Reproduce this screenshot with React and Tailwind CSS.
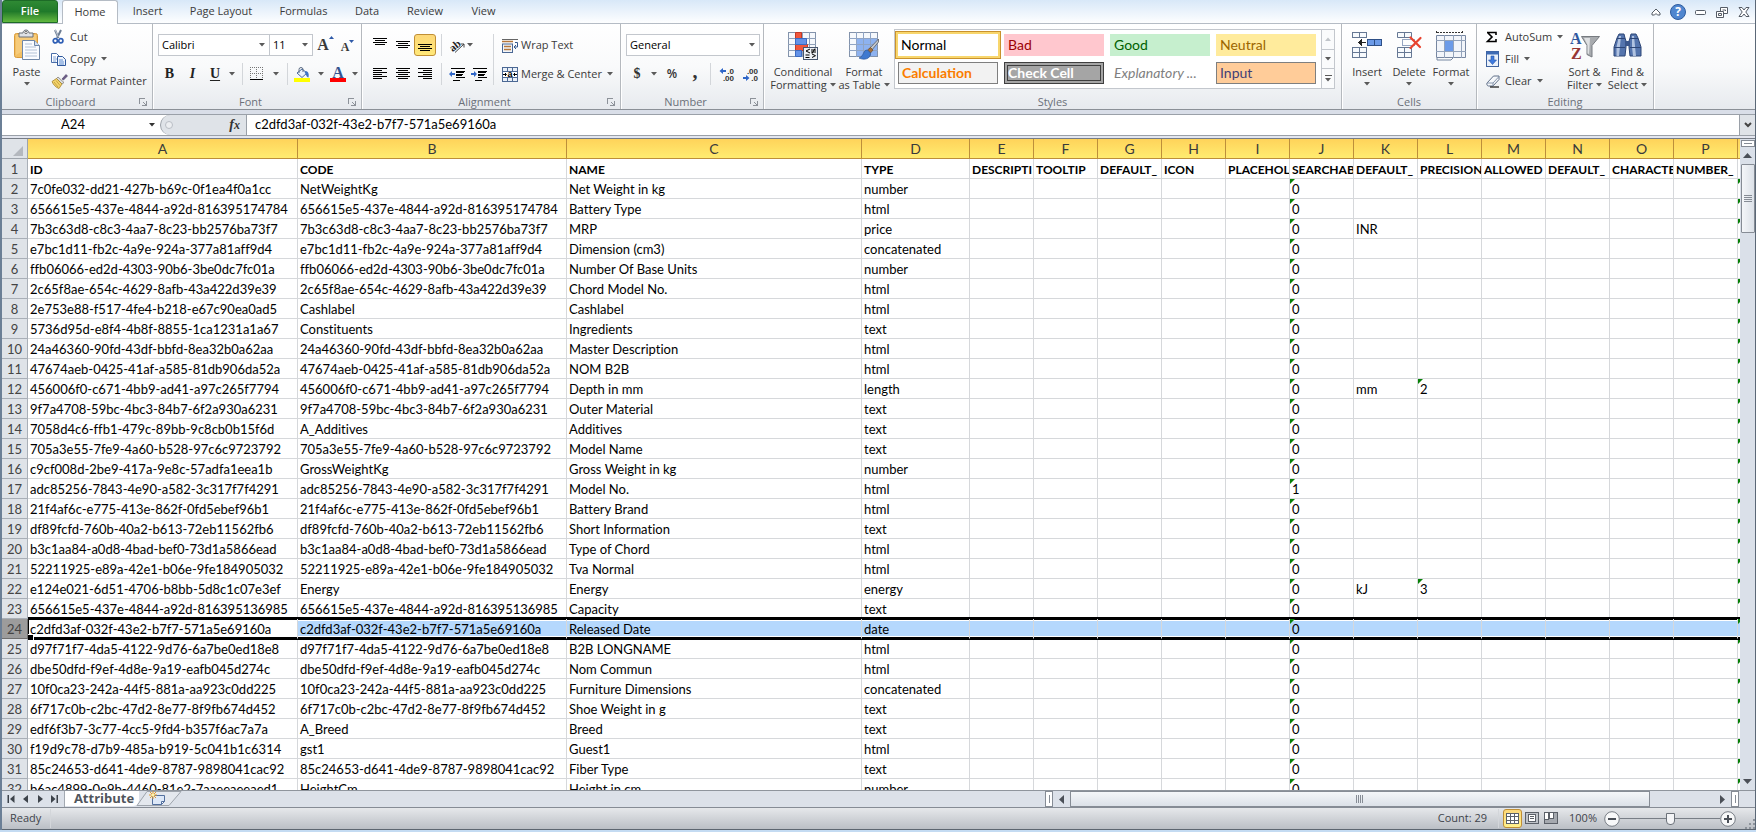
import React, { useState } from 'react';
import clsx from 'clsx';

const TABS = [
  { label: 'Insert', width: 'w-[57px]' },
  { label: 'Page Layout', width: 'w-[90px]' },
  { label: 'Formulas', width: 'w-[75px]' },
  { label: 'Data', width: 'w-[52px]' },
  { label: 'Review', width: 'w-[64px]' },
  { label: 'View', width: 'w-[53px]' },
];

const COLUMNS = [
  { letter: 'A', title: 'ID', width: 'w-[270px]' },
  { letter: 'B', title: 'CODE', width: 'w-[269px]' },
  { letter: 'C', title: 'NAME', width: 'w-[295px]' },
  { letter: 'D', title: 'TYPE', width: 'w-[108px]' },
  { letter: 'E', title: 'DESCRIPTI', width: 'w-[64px]' },
  { letter: 'F', title: 'TOOLTIP', width: 'w-[64px]' },
  { letter: 'G', title: 'DEFAULT_', width: 'w-[64px]' },
  { letter: 'H', title: 'ICON', width: 'w-[64px]' },
  { letter: 'I', title: 'PLACEHOL', width: 'w-[64px]' },
  { letter: 'J', title: 'SEARCHAB', width: 'w-[64px]' },
  { letter: 'K', title: 'DEFAULT_', width: 'w-[64px]' },
  { letter: 'L', title: 'PRECISION', width: 'w-[64px]' },
  { letter: 'M', title: 'ALLOWED', width: 'w-[64px]' },
  { letter: 'N', title: 'DEFAULT_', width: 'w-[64px]' },
  { letter: 'O', title: 'CHARACTE', width: 'w-[64px]' },
  { letter: 'P', title: 'NUMBER_', width: 'w-[64px]' },
  { letter: '', title: '', width: 'w-[64px]' },
];

// id, code (null when it repeats the id), name, type, searchable, unit, precision
const ROWS = [
  ['7c0fe032-dd21-427b-b69c-0f1ea4f0a1cc', 'NetWeightKg', 'Net Weight in kg', 'number', '0'],
  ['656615e5-437e-4844-a92d-816395174784', null, 'Battery Type', 'html', '0'],
  ['7b3c63d8-c8c3-4aa7-8c23-bb2576ba73f7', null, 'MRP', 'price', '0', 'INR'],
  ['e7bc1d11-fb2c-4a9e-924a-377a81aff9d4', null, 'Dimension (cm3)', 'concatenated', '0'],
  ['ffb06066-ed2d-4303-90b6-3be0dc7fc01a', null, 'Number Of Base Units', 'number', '0'],
  ['2c65f8ae-654c-4629-8afb-43a422d39e39', null, 'Chord Model No.', 'html', '0'],
  ['2e753e88-f517-4fe4-b218-e67c90ea0ad5', 'Cashlabel', 'Cashlabel', 'html', '0'],
  ['5736d95d-e8f4-4b8f-8855-1ca1231a1a67', 'Constituents', 'Ingredients', 'text', '0'],
  ['24a46360-90fd-43df-bbfd-8ea32b0a62aa', null, 'Master Description', 'html', '0'],
  ['47674aeb-0425-41af-a585-81db906da52a', null, 'NOM B2B', 'html', '0'],
  ['456006f0-c671-4bb9-ad41-a97c265f7794', null, 'Depth in mm', 'length', '0', 'mm', '2'],
  ['9f7a4708-59bc-4bc3-84b7-6f2a930a6231', null, 'Outer Material', 'text', '0'],
  ['7058d4c6-ffb1-479c-89bb-9c8cb0b15f6d', 'A_Additives', 'Additives', 'text', '0'],
  ['705a3e55-7fe9-4a60-b528-97c6c9723792', null, 'Model Name', 'text', '0'],
  ['c9cf008d-2be9-417a-9e8c-57adfa1eea1b', 'GrossWeightKg', 'Gross Weight in kg', 'number', '0'],
  ['adc85256-7843-4e90-a582-3c317f7f4291', null, 'Model No.', 'html', '1'],
  ['21f4af6c-e775-413e-862f-0fd5ebef96b1', null, 'Battery Brand', 'html', '0'],
  ['df89fcfd-760b-40a2-b613-72eb11562fb6', null, 'Short Information', 'text', '0'],
  ['b3c1aa84-a0d8-4bad-bef0-73d1a5866ead', null, 'Type of Chord', 'html', '0'],
  ['52211925-e89a-42e1-b06e-9fe184905032', null, 'Tva Normal', 'html', '0'],
  ['e124e021-6d51-4706-b8bb-5d8c1c07e3ef', 'Energy', 'Energy', 'energy', '0', 'kJ', '3'],
  ['656615e5-437e-4844-a92d-816395136985', null, 'Capacity', 'text', '0'],
  ['c2dfd3af-032f-43e2-b7f7-571a5e69160a', null, 'Released Date', 'date', '0'],
  ['d97f71f7-4da5-4122-9d76-6a7be0ed18e8', null, 'B2B LONGNAME', 'html', '0'],
  ['dbe50dfd-f9ef-4d8e-9a19-eafb045d274c', null, 'Nom Commun', 'html', '0'],
  ['10f0ca23-242a-44f5-881a-aa923c0dd225', null, 'Furniture Dimensions', 'concatenated', '0'],
  ['6f717c0b-c2bc-47d2-8e77-8f9fb674d452', null, 'Shoe Weight in g', 'text', '0'],
  ['edf6f3b7-3c77-4cc5-9fd4-b357f6ac7a7a', 'A_Breed', 'Breed', 'text', '0'],
  ['f19d9c78-d7b9-485a-b919-5c041b1c6314', 'gst1', 'Guest1', 'html', '0'],
  ['85c24653-d641-4de9-8787-9898041cac92', null, 'Fiber Type', 'text', '0'],
  ['b6ac4899-0e9b-4460-81e2-7aaeeaeeaed1', 'HeightCm', 'Height in cm', 'number', '0'],
];

const SELECTED_ROW = 24;

function Caret({ className = 'text-[#5a5a5a]' }) {
  return (
    <svg width="6" height="4" viewBox="0 0 6 4" className={clsx('shrink-0', className)}>
      <path d="M0 0h6L3 3.6z" fill="currentColor" />
    </svg>
  );
}

function Svg({ w, h, children, crisp }) {
  return (
    <svg width={w} height={h} viewBox={`0 0 ${w} ${h}`} fill="none" className="shrink-0 overflow-visible" shapeRendering={crisp ? 'crispEdges' : undefined}>
      {children}
    </svg>
  );
}

/* ---------- icons ---------- */

function PasteIcon() {
  return (
    <Svg w={28} h={32}>
      <rect x="1.5" y="4.5" width="23" height="24" rx="2" fill="#f2bf62" stroke="#d99b3c" />
      <path d="M3 6h20v8L3 26z" fill="#f8d084" opacity=".7" />
      <path d="M6 8V4h4c0-4 6-4 6 0h4v4z" fill="#dfe2e6" stroke="#6b7178" />
      <circle cx="13" cy="3.5" r="1.2" fill="#fff" stroke="#555" strokeWidth=".8" />
      <path d="M9.500 11.500h12l5 5v14h-17z" fill="#fafcff" stroke="#6f87a8" />
      <path d="M21.500 11.500v5h5" fill="#d6e0ee" stroke="#6f87a8" />
      <path d="M12 15h7M12 18h11M12 21h12M12 24h12M12 27h12" stroke="#b3c2d6" />
    </Svg>
  );
}

function CutIcon() {
  return (
    <Svg w={14} h={14}>
      <path d="M4 0l3.500 8M10 0L6 8" stroke="#6c7c92" strokeWidth="2" />
      <path d="M4.200 0l3.200 7" stroke="#dfe7f0" strokeWidth=".7" />
      <circle cx="4.300" cy="10.800" r="2.100" stroke="#2f5fb5" strokeWidth="1.700" />
      <circle cx="9.800" cy="10.800" r="2.100" stroke="#2f5fb5" strokeWidth="1.700" />
    </Svg>
  );
}

function CopyIcon() {
  return (
    <Svg w={15} h={13}>
      <path d="M.5.5h5l3 3v6h-8z" fill="#fff" stroke="#4a6ea9" />
      <path d="M2 4h3M2 6h4M2 8h3" stroke="#7fa1d6" />
      <path d="M6.500 3.500h5l3 3v6h-8z" fill="#eef4fc" stroke="#2f589c" />
      <path d="M8 7h4M8 9h5M8 11h5" stroke="#5d8bd0" />
    </Svg>
  );
}

function PainterIcon() {
  return (
    <Svg w={17} h={15}>
      <path d="M11 5l4-4.500 1.500 1.500-4 4z" fill="#6a5a86" stroke="#4c4064" strokeWidth=".6" />
      <path d="M7 3l6 5.500-2 1.500-5.500-5.500z" fill="#d8dade" stroke="#77716a" strokeWidth=".7" />
      <path d="M5.500 4.500L1 7.500c1 3 4 6 7 7l3-4.500z" fill="#f3d46b" stroke="#a5812c" strokeWidth=".8" />
      <path d="M3 8l4 5M5 6.500l4 5" stroke="#b98f30" strokeWidth=".7" />
    </Svg>
  );
}

function GrowFontIcon({ small }) {
  return (
    <span className={clsx("flex items-start font-['Liberation_Serif',serif] leading-none font-bold text-[#3a3a3a]", small ? 'pt-1 text-xs' : 'text-base')}>
      A
      <svg width="5" height="3" viewBox="0 0 5 3" className="-mt-px shrink-0">
        <path d={small ? 'M0 0h5L2.500 3z' : 'M0 3h5L2.500 0z'} fill="#2f5aa8" />
      </svg>
    </span>
  );
}

function BorderIcon() {
  return (
    <Svg w={14} h={14} crisp>
      <path d="M0 .5h13M0 6.500h13M.5 0v12M6.500 0v12M12.500 0v12" stroke="#777" strokeDasharray="1 1" />
      <path d="M0 12.500h13" stroke="#000" />
    </Svg>
  );
}

function FillIcon() {
  return (
    <Svg w={16} h={15}>
      <path d="M3 6l5-4 5 4-5 4.500z" fill="#eaf1fa" stroke="#4c6c9c" />
      <path d="M5 6V2.500a2 2 0 014 0V5" stroke="#5c6c84" />
      <path d="M12 4c3 1 3 4 2.500 6.500C12 10 12 7 10.500 5z" fill="#3f74c4" />
      <path d="M0 11h16v4H0z" fill="#ff0" />
    </Svg>
  );
}

function FontColorIcon() {
  return (
    <span className="flex h-[15px] w-4 flex-col items-center justify-end border-b-4 border-[#f00] font-['Liberation_Serif',serif] text-base leading-[11px] font-bold text-[#34538f]">
      A
    </span>
  );
}

const LINES = {
  left: [[0, 14], [0, 9], [0, 14], [0, 9], [0, 14], [0, 9]],
  center: [[0, 14], [2, 10], [0, 14], [2, 10], [0, 14], [2, 10]],
  right: [[0, 14], [5, 9], [0, 14], [5, 9], [0, 14], [5, 9]],
};

function AlignIcon({ lines }) {
  return (
    <Svg w={14} h={12} crisp>
      {LINES[lines].map(([x, w], i) => (
        <rect key={i} x={x} y={i * 2} width={w} height="1" fill="#000" />
      ))}
    </Svg>
  );
}

function VAlignIcon({ offset }) {
  return (
    <Svg w={14} h={16} crisp>
      {[0, 2, 4, 6].map((y, i) => (
        <rect key={y} x={i % 2 ? 2 : 0} y={offset + y} width={i % 2 ? 10 : 14} height="1" fill="#000" />
      ))}
    </Svg>
  );
}

function IndentIcon({ right }) {
  return (
    <Svg w={16} h={14} crisp>
      <path d="M2 1.500h14M7 4.500h9M7 7.500h7M7 10.500h9M4 13.500h7" stroke="#000" />
      <path d="M7 5h8M7 8h6" stroke="#000" />
      <path d={right ? 'M0 6h3V4l3 3-3 3V8H0z' : 'M6 6H3V4L0 7l3 3V8h3z'} fill="#2f66c8" shapeRendering="auto" />
    </Svg>
  );
}

function OrientIcon() {
  return (
    <Svg w={16} h={15}>
      <text x="0" y="12" transform="rotate(-40 5 8)" fontFamily="Liberation Serif, serif" fontSize="11" fontWeight="bold" fill="#222">ab</text>
      <path d="M6 14.500L15 6M15 9.500V6h-3.500" stroke="#444" />
    </Svg>
  );
}

function WrapIcon() {
  return (
    <Svg w={17} h={15}>
      <path d="M0 1.500h16" stroke="#666" />
      <path d="M0 3.500h11" stroke="#b5763a" strokeWidth="1.500" />
      <rect x=".5" y="6" width="10" height="8.500" fill="#f3f6fa" stroke="#4b6894" />
      <path d="M2 8.500h7M2 11.500h7" stroke="#b5763a" strokeWidth="1.500" />
      <path d="M13 4.500h2.500V9H12M14 7l-2 2 2 2" stroke="#34588e" />
    </Svg>
  );
}

function MergeIcon() {
  return (
    <Svg w={16} h={15}>
      <rect x=".5" y=".5" width="15" height="14" fill="#e9f0f8" stroke="#4b6894" />
      <path d="M0 4.500h16M0 10.500h16M5.500 0v4M10.500 0v4M5.500 11v4M10.500 11v4" stroke="#4b6894" />
      <path d="M1 5h14v5H1z" fill="#fff" />
      <path d="M1 7.500h3M12 7.500h3M3 6l1.500 1.500L3 9M13 6l-1.500 1.500L13 9" stroke="#000" />
      <text x="5.500" y="10" fontFamily="Liberation Sans, sans-serif" fontSize="9" fontWeight="bold" fill="#000">a</text>
    </Svg>
  );
}

function DecimalIcon({ decrease }) {
  return (
    <Svg w={16} h={15}>
      <g fontFamily="Liberation Sans, sans-serif" fontSize="8" fontWeight="bold" fill="#333">
        <text x="15" y="7" textAnchor="end">{decrease ? '.00' : '.0'}</text>
        <text x="15" y="14" textAnchor="end">{decrease ? '.0' : '.00'}</text>
      </g>
      <path d={decrease ? 'M0 10h3V8l3.500 3L3 14v-2H0z' : 'M7 3H4V1L.5 4 4 7V5h3z'} fill="#2f66c8" />
    </Svg>
  );
}

function CondFormatIcon() {
  return (
    <Svg w={30} h={30}>
      <rect x=".5" y="1.500" width="27" height="24" fill="#f5f8fc" stroke="#8393ab" />
      <path d="M7.500 1v25M21.500 1v25M14.500 1v25M0 7.500h28M0 13.500h28M0 19.500h28" stroke="#8fa0b9" />
      <path d="M7.500 1.500h6v6h-6zM7.500 13.500h12v6h-12z" fill="#f0563c" stroke="#c23a26" />
      <path d="M7.500 7.500h11v6h-11zM7.500 19.500h6v6h-6z" fill="#6392e8" stroke="#3b6bc2" />
      <rect x="15.500" y="16.500" width="14" height="12" fill="#eef2f7" stroke="#46566f" />
      <path d="M22 18l-4 2 4 2M17.500 24h4M17.500 26.500h4M23 19h5M23 21h5M27 17.500l-3 5M24 23l3.500 1.700L24 26.500" stroke="#000" />
    </Svg>
  );
}

function TableFormatIcon() {
  return (
    <Svg w={30} h={30}>
      <rect x=".5" y="1.500" width="28" height="24" fill="#f5f8fc" stroke="#8393ab" />
      <path d="M7 8h21v17H7z" fill="#8db2f0" />
      <path d="M7.500 1v25M14.500 1v25M21.500 1v25M0 7.500h29M0 13.500h29M0 19.500h29" stroke="#8fa4c4" />
      <path d="M29.500 8L20 18l2 2 7.500-9z" fill="#c4c7cb" stroke="#595d63" strokeWidth=".8" />
      <path d="M21.500 16.500l-3 2.500 3 3 2.500-3z" fill="#a3703d" stroke="#6d4a27" strokeWidth=".7" />
      <path d="M18.500 19c-5 0-3 6-8.500 8 5 2.500 12 1 11.500-5z" fill="#3f79cf" stroke="#2a569d" strokeWidth=".7" />
    </Svg>
  );
}

function InsertIcon() {
  return (
    <Svg w={30} h={30} crisp>
      <path d="M.5 1.500h14v5H.5zM7.500 1.500v5M.5 16.500h14v10H.5zM.5 21.500h14M7.500 16.500v10" fill="#f7fafd" stroke="#667894" />
      <path d="M15.500 8.500h14v6h-14z" fill="#6c9be8" stroke="#2e4f86" />
      <path d="M22.500 8v7" stroke="#2e4f86" />
      <path d="M6 11.500L10 8v7z" fill="#222" />
      <path d="M9 11.500h5" stroke="#222" />
    </Svg>
  );
}

function DeleteIcon() {
  return (
    <Svg w={30} h={30}>
      <path d="M3.500 1.500h14v5h-14zM10.500 1.500v5M3.500 16.500h14v10h-14zM3.500 21.500h14M10.500 16.500v10" fill="#f7fafd" stroke="#667894" />
      <path d="M8.500 8.500h12v6h-12z" stroke="#2e4f86" strokeDasharray="1 1" />
      <path d="M16.500 6.500l9.500 9.500M26.500 7l-10 10" stroke="#e8432e" strokeWidth="2.200" strokeLinecap="round" />
    </Svg>
  );
}

function FormatCellsIcon() {
  return (
    <Svg w={30} h={30}>
      <path d="M1 1.500h25M.5 0v3M26.500 0v3" stroke="#333" strokeDasharray="2 1" />
      <path d="M.5 4.500h29v22h-29z" fill="#f2f5fa" stroke="#7787a1" />
      <path d="M8.500 4v23M17.500 4v23M25.500 4v23M0 9.500h30M0 20.500h30" stroke="#93a3bb" />
      <path d="M9 10h8v10H9z" fill="#6c9be8" />
      <path d="M1 27v2h14l2-2" stroke="#7787a1" />
    </Svg>
  );
}

function SumIcon() {
  return (
    <Svg w={12} h={14}>
      <path d="M1 2.500h9V5M1.500 2.500L6 7l-4.500 4.500H10V9" stroke="#000" strokeWidth="1.600" />
    </Svg>
  );
}

function FillDownIcon() {
  return (
    <Svg w={14} h={16}>
      <rect x=".5" y=".5" width="12" height="15" fill="#eaf1fb" stroke="#40639e" />
      <path d="M.5.5h12v3H.5z" fill="#3f6cb5" />
      <path d="M5 5h3v4h2.500l-4 4.500L2.500 9H5z" fill="#3f7be0" stroke="#28549f" strokeWidth=".6" />
    </Svg>
  );
}

function ClearIcon() {
  return (
    <Svg w={14} h={13}>
      <path d="M1 8l6.500-7H13v3.500L7 11H2.500C1 11 .5 9 1 8z" fill="#f6f8fb" stroke="#5f6f88" />
      <path d="M7 11V8l6-6.500" stroke="#8796ad" />
      <path d="M1 8h6" stroke="#8796ad" />
      <path d="M4 12h9" stroke="#222" strokeWidth="1.300" />
    </Svg>
  );
}

function SortIcon() {
  return (
    <Svg w={30} h={30}>
      <g fontFamily="Liberation Serif, serif" fontSize="16" fontWeight="bold">
        <text x="0" y="13" fill="#31599f">A</text>
        <text x="1" y="28" fill="#963634">Z</text>
      </g>
      <path d="M11.500 5.500h18L22 14.500V26l-5-2.500v-9z" fill="#a8abaf" stroke="#777b80" />
      <path d="M14 7h6l-1 16-1.500-.5V14z" fill="#dfe1e3" />
    </Svg>
  );
}

function FindIcon() {
  return (
    <Svg w={30} h={30}>
      <path d="M6 3h5l1 4 1 3v6l-1 9H1V16l3-9zM18 3h5l2 4 3 9v9H17l-1-9v-6l1-3z" fill="#5474ad" stroke="#2d4677" />
      <path d="M3.500 16L6 5h2L6 25H3.500zM19 16V5h2l2 20h-3z" fill="#c2d1ea" opacity=".85" />
      <path d="M1 16.500h11M17 16.500h11M4 7.500h8M17 7.500h8" stroke="#2d4677" />
      <path d="M12 10h5v5h-5z" fill="#3b578c" />
    </Svg>
  );
}

/* ---------- ribbon ---------- */

function Group({ label, launcher = true, className, children }) {
  return (
    <section className={clsx('flex shrink-0 flex-col border-r border-[#b5b9be] shadow-[1px_0_0_#fff]', className)}>
      <div className="flex flex-1">{children}</div>
      <div className="flex h-[14px] items-center text-[#6b7079]">
        <span className="flex-1 text-center">{label}</span>
        {launcher && (
          <button aria-label={`${label} settings`} className="mr-[5px]">
            <Svg w={8} h={8} crisp>
              <path d="M.5 6V.5H6M4 4l3 3M7.500 3v4.500H3" stroke="#8d9299" />
            </Svg>
          </button>
        )}
      </div>
    </section>
  );
}

function IconButton({ label, className, children }) {
  return (
    <button aria-label={label} className={clsx('flex h-[22px] shrink-0 items-center justify-center', className)}>
      {children}
    </button>
  );
}

function BigButton({ icon: Icon, lines, caretBelow, className }) {
  return (
    <button className={clsx('flex shrink-0 flex-col items-center leading-[13px]', className)}>
      <Icon />
      <span className="mt-1 flex h-[13px] items-center">{lines[0]}</span>
      {caretBelow ? (
        <span className="flex h-[11px] items-center"><Caret /></span>
      ) : (
        <span className="flex h-[13px] items-center gap-[3px]">{lines[1]} <Caret /></span>
      )}
    </button>
  );
}

function SmallButton({ icon: Icon, label, caret }) {
  return (
    <button className="flex h-[22px] items-center whitespace-nowrap">
      <span className="flex w-[19px] shrink-0 items-center">
        <Icon />
      </span>
      {label}
      {caret && <Caret className="ml-[5px] text-[#5a5a5a]" />}
    </button>
  );
}

function Combo({ label, options, className }) {
  return (
    <label className={clsx('relative flex h-[22px] items-center border border-[#c3c7cd] bg-white', className)}>
      <select aria-label={label} className="h-full w-full appearance-none bg-transparent pl-[3px] text-black outline-none">
        {options.map((o) => (
          <option key={o}>{o}</option>
        ))}
      </select>
      <span className="pointer-events-none absolute right-1">
        <Caret />
      </span>
    </label>
  );
}

function Sep({ className = 'h-[22px]' }) {
  return <span className={clsx('w-px shrink-0 bg-[#d3d6da]', className)} />;
}

function CaretButton({ label }) {
  return (
    <IconButton label={label} className="w-3">
      <Caret />
    </IconButton>
  );
}

const STYLE_CELLS = [
  { label: 'Normal', className: 'bg-white pl-[3px] text-black shadow-[0_0_0_2px_#f8d66c,0_0_0_3px_#c9922e]' },
  { label: 'Bad', className: 'bg-[#ffc7ce] pl-1 text-[#9c0006]' },
  { label: 'Good', className: 'bg-[#c6efce] pl-1 text-[#006100]' },
  { label: 'Neutral', className: 'bg-[#ffeb9c] pl-1 text-[#9c6500]' },
  { label: 'Calculation', className: 'border border-[#7f7f7f] bg-[#f2f2f2] pl-[3px] font-bold text-[#fa7d00]' },
  { label: 'Check Cell', className: 'border-4 border-double border-[#3f3f3f] bg-[#a5a5a5] font-bold text-white' },
  { label: 'Explanatory ...', className: 'pl-1 text-[#7f7f7f] italic' },
  { label: 'Input', className: 'border border-[#7f7f7f] bg-[#ffcc99] pl-[3px] text-[#3f3f76]' },
];

function StyleGallery() {
  return (
    <div className="mt-[5px] flex h-[60px] border border-[#c3c7cd] bg-white">
      <div className="grid w-[426px] grid-cols-[repeat(4,100px)] content-start gap-[6px] pt-1 pl-[3px]">
        {STYLE_CELLS.map((s) => (
          <button
            key={s.label}
            className={clsx("flex h-[22px] items-center font-['Lato',sans-serif] text-sm leading-[14px] whitespace-nowrap", s.className)}
          >
            {s.label}
          </button>
        ))}
      </div>
      <div className="flex w-[13px] flex-col divide-y divide-[#c3c7cd] border-l border-[#c3c7cd] bg-[#fafbfc]">
        <button aria-label="Previous styles" className="flex flex-1 items-center justify-center">
          <Caret className="rotate-180 text-[#c0c4c9]" />
        </button>
        <button aria-label="Next styles" className="flex flex-1 items-center justify-center">
          <Caret />
        </button>
        <button aria-label="More styles" className="flex flex-1 flex-col items-center justify-center gap-[2px]">
          <span className="h-px w-[7px] bg-[#5a5a5a]" />
          <Caret />
        </button>
      </div>
    </div>
  );
}

function Ribbon() {
  return (
    <div className="flex h-[86px] shrink-0 overflow-hidden border-b border-[#8b9097] bg-linear-to-b from-white via-[#f9fafb] to-[#e7eaee]">
      <Group label="Clipboard" className="w-[151px]">
        <BigButton icon={PasteIcon} lines={['Paste']} caretBelow className="w-[49px] pt-[5px]" />
        <div className="flex flex-col pt-[2px]">
          <SmallButton icon={CutIcon} label="Cut" />
          <SmallButton icon={CopyIcon} label="Copy" caret />
          <SmallButton icon={PainterIcon} label="Format Painter" />
        </div>
      </Group>

      <Group label="Font" className="w-[209px]">
        <div className="flex flex-col gap-[7px] pt-[10px] pl-[5px]">
          <div className="flex">
            <Combo label="Font" options={['Calibri', 'Arial', 'Cambria']} className="w-[112px]" />
            <Combo label="Font size" options={['11', '12', '14']} className="w-[43px] border-l-0" />
            <IconButton label="Grow font" className="w-[25px]">
              <GrowFontIcon />
            </IconButton>
            <IconButton label="Shrink font" className="w-[19px]">
              <GrowFontIcon small />
            </IconButton>
          </div>
          <div className="flex items-center font-['Liberation_Serif',serif] text-sm text-[#222]">
            <IconButton label="Bold" className="w-[23px] font-bold">B</IconButton>
            <IconButton label="Italic" className="w-[23px] font-bold italic">I</IconButton>
            <IconButton label="Underline" className="w-[22px] font-bold underline underline-offset-2">U</IconButton>
            <CaretButton label="Underline styles" />
            <span className="w-1" />
            <Sep />
            <IconButton label="Borders" className="w-[27px]">
              <BorderIcon />
            </IconButton>
            <CaretButton label="Border styles" />
            <span className="w-[5px]" />
            <Sep />
            <IconButton label="Fill color" className="w-[27px]">
              <FillIcon />
            </IconButton>
            <CaretButton label="Fill colors" />
            <IconButton label="Font color" className="w-[22px]">
              <FontColorIcon />
            </IconButton>
            <CaretButton label="Font colors" />
          </div>
        </div>
      </Group>

      <Group label="Alignment" className="w-[259px]">
        <div className="flex flex-col gap-[7px] pt-[10px] pl-[6px]">
          <div className="flex">
            <IconButton label="Top align" className="w-[23px]"><VAlignIcon offset={1} /></IconButton>
            <IconButton label="Middle align" className="w-[23px]"><VAlignIcon offset={4} /></IconButton>
            <IconButton label="Bottom align" className="w-[22px] rounded-[3px] border border-[#c08f35] bg-linear-to-b from-[#fdd878] to-[#ffe878]">
              <VAlignIcon offset={7} />
            </IconButton>
            <span className="w-[5px]" />
            <Sep />
            <IconButton label="Orientation" className="w-[38px] gap-[2px]">
              <OrientIcon />
              <Caret />
            </IconButton>
          </div>
          <div className="flex">
            <IconButton label="Align left" className="w-[23px]"><AlignIcon lines="left" /></IconButton>
            <IconButton label="Center" className="w-[23px]"><AlignIcon lines="center" /></IconButton>
            <IconButton label="Align right" className="w-[22px]"><AlignIcon lines="right" /></IconButton>
            <span className="w-[5px]" />
            <Sep />
            <IconButton label="Decrease indent" className="w-[29px]"><IndentIcon /></IconButton>
            <IconButton label="Increase indent" className="w-4"><IndentIcon right /></IconButton>
          </div>
        </div>
        <div className="flex pt-[10px] pl-[6px]">
          <Sep className="h-[51px]" />
          <div className="flex flex-col gap-[7px] pl-2">
            <SmallButton icon={WrapIcon} label="Wrap Text" />
            <SmallButton icon={MergeIcon} label="Merge & Center" caret />
          </div>
        </div>
      </Group>

      <Group label="Number" className="w-[143px]">
        <div className="flex flex-col gap-[7px] pt-[10px] pl-[5px]">
          <Combo label="Number format" options={['General', 'Number', 'Currency']} className="w-[134px]" />
          <div className="flex items-center">
            <IconButton label="Accounting format" className="w-[22px] font-['Liberation_Serif',serif] text-sm font-bold text-[#333]">$</IconButton>
            <CaretButton label="Currency symbols" />
            <IconButton label="Percent style" className="w-[24px] text-xs font-semibold text-[#333]">%</IconButton>
            <IconButton label="Comma style" className="w-[22px] pb-[6px] font-['Liberation_Serif',serif] text-xl leading-none font-bold text-[#333]">,</IconButton>
            <span className="w-1" />
            <Sep />
            <IconButton label="Increase decimal" className="w-[31px]"><DecimalIcon /></IconButton>
            <IconButton label="Decrease decimal" className="w-[18px]"><DecimalIcon decrease /></IconButton>
          </div>
        </div>
      </Group>

      <Group label="Styles" launcher={false} className="w-[578px]">
        <BigButton icon={CondFormatIcon} lines={['Conditional', 'Formatting']} className="ml-[6px] w-[66px] pt-[7px]" />
        <BigButton icon={TableFormatIcon} lines={['Format', 'as Table']} className="mr-[2px] w-[56px] pt-[7px]" />
        <StyleGallery />
      </Group>

      <Group label="Cells" launcher={false} className="w-[135px]">
        <div className="flex pl-1">
          <BigButton icon={InsertIcon} lines={['Insert']} caretBelow className="w-[42px] pt-[7px]" />
          <BigButton icon={DeleteIcon} lines={['Delete']} caretBelow className="w-[42px] pt-[7px]" />
          <BigButton icon={FormatCellsIcon} lines={['Format']} caretBelow className="w-[42px] pt-[7px]" />
        </div>
      </Group>

      <Group label="Editing" launcher={false} className="w-[177px]">
        <div className="flex w-[86px] flex-col pt-[2px] pl-[9px]">
          <SmallButton icon={SumIcon} label="AutoSum" caret />
          <SmallButton icon={FillDownIcon} label="Fill" caret />
          <SmallButton icon={ClearIcon} label="Clear" caret />
        </div>
        <BigButton icon={SortIcon} lines={['Sort &', 'Filter']} className="w-[43px] pt-[7px]" />
        <BigButton icon={FindIcon} lines={['Find &', 'Select']} className="w-[43px] pt-[7px]" />
      </Group>
    </div>
  );
}

function TabBar() {
  return (
    <div className="flex h-[23px] shrink-0 items-end">
      <button className="h-[23px] w-[56px] rounded-t-[3px] border border-[#1d6b27] bg-linear-to-b from-[#2f8a34] via-[#1f7a2a] to-[#62b93f] font-semibold text-white">
        File
      </button>
      <button className="z-10 mr-px -mb-px ml-1 h-[24px] w-[56px] rounded-t-[3px] border border-b-0 border-[#b5bcc5] bg-white">
        Home
      </button>
      {TABS.map((t) => (
        <button key={t.label} className={clsx('h-[23px]', t.width)}>
          {t.label}
        </button>
      ))}
      <div className="ml-auto flex h-[22px] items-center">
        <button aria-label="Minimize ribbon" className="flex w-[22px] justify-center">
          <Svg w={10} h={8}>
            <path d="M1 5l4-4 4 4v2H6.500L5 5.500 3.500 7H1z" fill="#fff" stroke="#555c66" />
          </Svg>
        </button>
        <button aria-label="Help" className="flex w-[22px] justify-center">
          <span className="flex size-4 items-center justify-center rounded-full border border-[#2d5c9f] bg-[#4f86cf] text-xs leading-none font-bold text-white">?</span>
        </button>
        <button aria-label="Minimize" className="flex w-[22px] justify-center">
          <Svg w={11} h={6}>
            <rect x=".5" y="1.500" width="10" height="4" rx="1" fill="#fff" stroke="#555c66" />
          </Svg>
        </button>
        <button aria-label="Restore" className="flex w-[22px] justify-center">
          <Svg w={12} h={11}>
            <path d="M4.500.5h7v6h-7z" fill="#fff" stroke="#555c66" />
            <path d="M.5 4.500h7v6h-7z" fill="#fff" stroke="#555c66" />
            <path d="M2.500 6.500h3v2h-3zM6.500 3h3v1" stroke="#555c66" />
          </Svg>
        </button>
        <button aria-label="Close" className="flex w-[22px] justify-center">
          <Svg w={12} h={10}>
            <path d="M1 .5h3L6 3 8 .5h3L7.800 5 11 9.500H8L6 7 4 9.500H1L4.200 5z" fill="#fff" stroke="#555c66" />
          </Svg>
        </button>
      </div>
    </div>
  );
}

function FormulaBar() {
  return (
    <div className="flex h-[26px] shrink-0 border-b border-[#777d87] bg-[#d9dee8] pt-1">
      <div className="flex h-[22px] flex-1 border-y border-[#9aa0a8] bg-white font-['Lato',sans-serif] text-[13px] text-black">
        <label className="flex w-[158px] items-center">
          <input aria-label="Name box" defaultValue="A24" className="w-[142px] bg-transparent text-center outline-none" />
          <Caret className="ml-[5px] text-[#333]" />
        </label>
        <div className="flex w-[86px] items-center justify-between rounded-l-full border-l border-[#9aa0a8] bg-[#dfe3e8] pr-[6px] pl-1">
          <span className="size-2 rounded-full border border-[#b9bec5] bg-[#eceef1]" />
          <button aria-label="Insert function" className="font-['Liberation_Serif',serif] text-sm leading-none font-bold text-[#333] italic">
            f<span className="text-xs">x</span>
          </button>
        </div>
        <input
          aria-label="Formula bar"
          defaultValue="c2dfd3af-032f-43e2-b7f7-571a5e69160a"
          className="min-w-0 flex-1 border-l border-[#9aa0a8] bg-transparent pl-2 outline-none"
        />
        <button aria-label="Expand formula bar" className="flex w-4 items-center justify-center border-l border-[#9aa0a8] bg-[#dfe3e8]">
          <Svg w={8} h={6}>
            <path d="M1 1l3 3 3-3" stroke="#444" strokeWidth="2" />
          </Svg>
        </button>
      </div>
    </div>
  );
}

/* ---------- sheet ---------- */

function ErrorMark() {
  return <span className="absolute top-0 left-0 border-t-5 border-r-5 border-t-[#078007] border-r-transparent" />;
}

function cellValues([id, code, name, type, searchable, unit, precision]) {
  return [id, code ?? id, name, type, '', '', '', '', '', searchable, unit ?? '', precision ?? '', '', '', '', '', '\u00a0'];
}

function Cell({ value, col, selected }) {
  const marked = value !== '' && (col === 9 || col === 11 || col === 16);
  return (
    <td
      className={clsx(
        'relative h-5 border-r border-b border-r-[#d6d8db] p-0 pt-[2px] pl-[2px] leading-[17px] whitespace-nowrap',
        selected
          ? 'z-10 border-b-black shadow-[inset_0_1px_#000,inset_0_2px_#fff,inset_0_-1px_#000,inset_0_-2px_#fff,0_-2px_#000,0_1px_#000]'
          : 'overflow-hidden border-b-[#d6d8db]',
        selected && col > 0 ? 'bg-[#b5d8fd]' : 'bg-white'
      )}
    >
      {marked && <ErrorMark />}
      {selected && col === 0 && (
        <>
          <span className="absolute inset-y-0 left-0 w-px bg-black" />
          <span className="absolute -bottom-[2px] left-0 size-[6px] border-t border-r border-white bg-black" />
        </>
      )}
      {value}
    </td>
  );
}

function RowHeader({ n }) {
  return (
    <th
      scope="row"
      className={clsx(
        'h-5 border-r border-b p-0 pt-[2px] leading-[17px] font-normal text-[#444]',
        n === SELECTED_ROW ? 'border-[#6f6f6f] bg-[#9c9c9c]' : 'border-[#a9afb7] bg-[#dfe3e8]'
      )}
    >
      {n}
    </th>
  );
}

function Sheet() {
  return (
    <div className="min-w-0 flex-1 overflow-hidden bg-white font-['Lato',sans-serif] text-[13px] text-black">
      <table className="w-[2060px] table-fixed border-separate border-spacing-0 [font-variant-ligatures:none]">
        <thead>
          <tr>
            <th aria-label="Select all" className="h-5 w-[26px] border-r border-b border-[#9ea4ac] bg-[#dfe3e8] p-0">
              <span className="mt-1 mr-1 ml-auto block size-0 border-b-10 border-l-10 border-b-[#b4b8be] border-l-transparent" />
            </th>
            {COLUMNS.map((c, i) => (
              <th
                key={i}
                scope="col"
                className={clsx('h-5 border-r border-b border-[#bd8f3a] bg-linear-to-b from-[#ffd35a] to-[#ffec70] p-0 text-sm leading-[19px] font-normal text-[#3a3a3a]', c.width)}
              >
                {c.letter}
              </th>
            ))}
            <th />
          </tr>
        </thead>
        <tbody>
          <tr>
            <RowHeader n={1} />
            {COLUMNS.map((c, i) => (
              <td key={i} className="h-5 overflow-hidden border-r border-b border-[#d6d8db] p-0 pt-[2px] pl-[2px] text-xs leading-[17px] font-bold whitespace-nowrap">
                {c.title}
              </td>
            ))}
          </tr>
          {ROWS.map((row, r) => (
            <tr key={row[0]}>
              <RowHeader n={r + 2} />
              {cellValues(row).map((value, col) => (
                <Cell key={col} value={value} col={col} selected={r + 2 === SELECTED_ROW} />
              ))}
            </tr>
          ))}
        </tbody>
      </table>
    </div>
  );
}

function VerticalScroll() {
  return (
    <div className="flex w-[15px] shrink-0 flex-col items-center bg-[#dae0e9]">
      <button aria-label="Split" className="mt-px flex h-[7px] w-[14px] items-center justify-center border border-[#868c95] bg-white">
        <span className="h-px w-2 bg-[#868c95]" />
      </button>
      <button aria-label="Scroll up" className="flex h-[17px] w-full rotate-180 items-center justify-center">
        <Svg w={9} h={5}><path d="M0 0h9L4.500 5z" fill="#4a4f57" /></Svg>
      </button>
      <div className="flex h-[69px] w-[14px] flex-col items-center justify-center gap-px rounded-[1px] border border-[#868c95] bg-linear-to-r from-[#f4f6f9] to-[#dce1e8]">
        {[0, 1, 2, 3].map((i) => (
          <span key={i} className="h-px w-2 bg-[#868c95]" />
        ))}
      </div>
      <button aria-label="Scroll down" className="mt-auto flex h-[18px] w-full items-center justify-center">
        <Svg w={9} h={5}><path d="M0 0h9L4.500 5z" fill="#4a4f57" /></Svg>
      </button>
    </div>
  );
}

const NAV = [
  { label: 'First sheet', arrow: 'M7.500 0v8L3 4z', bar: 'M.5 0h1.500v8H.5z' },
  { label: 'Previous sheet', arrow: 'M7 0v8L2 4z' },
  { label: 'Next sheet', arrow: 'M2 0v8l5-4z' },
  { label: 'Last sheet', arrow: 'M1 0v8l4.500-4z', bar: 'M6.500 0H8v8H6.500z' },
];

function SheetTabs() {
  return (
    <div className="flex h-[17px] shrink-0 border-t border-[#8f959d] bg-[#dce1e9]">
      <div className="flex w-[63px] items-center justify-around border-r border-[#a3a9b1] px-[2px]">
        {NAV.map(({ label, arrow, bar = '' }) => (
          <button key={label} aria-label={label}>
            <Svg w={9} h={8}><path d={arrow + bar} fill="#3d434b" /></Svg>
          </button>
        ))}
      </div>
      <button className="z-10 flex h-[15px] w-[74px] items-center justify-center rounded-br-md bg-white pl-1 text-[13px] leading-none font-bold text-[#50555c]">
        Attribute
      </button>
      <button aria-label="Insert sheet" className="-ml-[2px] flex">
        <Svg w={48} h={15}>
          <path d="M0 14.500L10 .5h34L32 14.500z" fill="#e4e8ee" stroke="#9ea4ac" />
          <path d="M15.500 4.500h12v6l-3 3h-9z" fill="#dde8f8" stroke="#53709f" />
          <path d="M27.500 10.500h-3v3z" fill="#fff" stroke="#53709f" />
          <path d="M16 0v8M12 4h8M13 1l6 6M19 1l-6 6" stroke="#e39a2c" />
          <circle cx="16" cy="4" r="1.500" fill="#fff3a8" />
        </Svg>
      </button>
      <div className="ml-auto flex w-[710px] shrink-0">
        <button aria-label="Resize tabs" className="flex w-2 items-center justify-center border border-[#868c95] bg-white">
          <span className="h-2 w-px bg-[#868c95]" />
        </button>
        <button aria-label="Scroll left" className="flex w-[17px] items-center justify-center">
          <Svg w={5} h={9}><path d="M5 0v9L0 4.500z" fill="#4a4f57" /></Svg>
        </button>
        <div className="flex flex-1">
          <div className="flex w-[90%] items-center justify-center gap-px border border-[#868c95] bg-linear-to-b from-[#f4f6f9] to-[#dce1e8]">
            {[0, 1, 2, 3].map((i) => (
              <span key={i} className="h-2 w-px bg-[#868c95]" />
            ))}
          </div>
        </div>
        <button aria-label="Scroll right" className="flex w-[17px] items-center justify-center">
          <Svg w={5} h={9}><path d="M0 0v9l5-4.500z" fill="#4a4f57" /></Svg>
        </button>
        <button aria-label="Split columns" className="flex w-2 items-center justify-center border border-[#868c95] bg-white">
          <span className="h-2 w-px bg-[#868c95]" />
        </button>
        <span className="w-4" />
      </div>
    </div>
  );
}

function ZoomButton({ label, plus }) {
  return (
    <button aria-label={label}>
      <Svg w={16} h={16}>
        <circle cx="8" cy="8" r="7.300" fill="#f7f8f9" stroke="#787e86" />
        <path d={plus ? 'M4 8h8M8 4v8' : 'M4 8h8'} stroke="#4a4f57" strokeWidth="2" />
      </Svg>
    </button>
  );
}

function StatusBar() {
  const [zoom, setZoom] = useState(100);
  return (
    <div className="flex h-[23px] shrink-0 items-center border-y border-t-[#868c95] border-b-[#5d6670] bg-linear-to-b from-[#e6e8eb] to-[#bbbfc5] text-[#3f444b]">
      <span className="w-12 pl-2">Ready</span>
      <Sep className="h-[19px]" />
      <span className="mr-[11px] ml-auto">Count: 29</span>
      <Sep className="h-[19px]" />
      <div className="ml-1 flex items-center gap-[3px]">
        <button aria-label="Normal view" className="flex h-[19px] w-[19px] items-center justify-center rounded-[3px] border border-[#c08f35] bg-linear-to-b from-[#fdd878] to-[#fff08c]">
          <Svg w={13} h={11} crisp>
            <path d="M.5.5h12v10H.5zM4.500 0v11M8.500 0v11M0 3.500h13M0 7.500h13" fill="#fff" stroke="#5b6068" />
          </Svg>
        </button>
        <button aria-label="Page layout view">
          <Svg w={15} h={13} crisp>
            <path d="M.5.5h13v11H.5z" fill="#bfc3c9" stroke="#5b6068" />
            <path d="M3.500 2.500h7v7h-7z" fill="#fff" stroke="#5b6068" />
            <path d="M5 4.500h4M5 6.500h4" stroke="#5b6068" />
          </Svg>
        </button>
        <button aria-label="Page break preview" className="ml-px">
          <Svg w={15} h={13} crisp>
            <path d="M.5.5h13v11H.5z" fill="#a5a9af" stroke="#5b6068" />
            <path d="M.5.5h4v7h-4zM5.500.5h4v6h-4z" fill="#fff" stroke="#5b6068" />
          </Svg>
        </button>
      </div>
      <span className="mr-[5px] ml-2 w-[32px] text-center">{zoom}%</span>
      <ZoomButton label="Zoom out" />
      <input
        type="range"
        aria-label="Zoom"
        min="0"
        max="200"
        value={zoom}
        onChange={(e) => setZoom(Number(e.target.value))}
        className="h-px w-[100px] appearance-none bg-[#787e86] [&::-webkit-slider-thumb]:h-[12px] [&::-webkit-slider-thumb]:w-[9px] [&::-webkit-slider-thumb]:appearance-none [&::-webkit-slider-thumb]:rounded-b-[4px] [&::-webkit-slider-thumb]:border [&::-webkit-slider-thumb]:border-[#6b7179] [&::-webkit-slider-thumb]:bg-[#f4f5f7]"
      />
      <ZoomButton label="Zoom in" plus />
      <span className="ml-[9px] flex h-full items-end">
        <Svg w={10} h={10} crisp>
          <path d="M8 0h2v2H8zM4 4h2v2H4zM8 4h2v2H8zM0 8h2v2H0zM4 8h2v2H4zM8 8h2v2H8z" fill="#8d939b" />
        </Svg>
      </span>
    </div>
  );
}

export default function App() {
  return (
    <div className="h-screen overflow-hidden bg-[#c4dbf2] pb-[2px] font-['Open_Sans',sans-serif] text-[11px] text-[#3b3b3b]">
      <div className="flex h-full flex-col border-r border-l-2 border-r-[#5b6877] border-l-[#6b7f96] bg-[#dce1e9]">
        <div className="flex shrink-0 flex-col bg-linear-to-b from-[#d8e8f8] to-white to-[24px]">
          <TabBar />
          <div className="h-px shrink-0 bg-[#b5bcc5]" />
          <Ribbon />
        </div>
        <FormulaBar />
        <div className="h-[3px] shrink-0 border-b border-[#777d87] bg-[#e3e6ef]" />
        <div className="flex min-h-0 flex-1">
          <Sheet />
          <VerticalScroll />
        </div>
        <SheetTabs />
        <StatusBar />
      </div>
    </div>
  );
}
